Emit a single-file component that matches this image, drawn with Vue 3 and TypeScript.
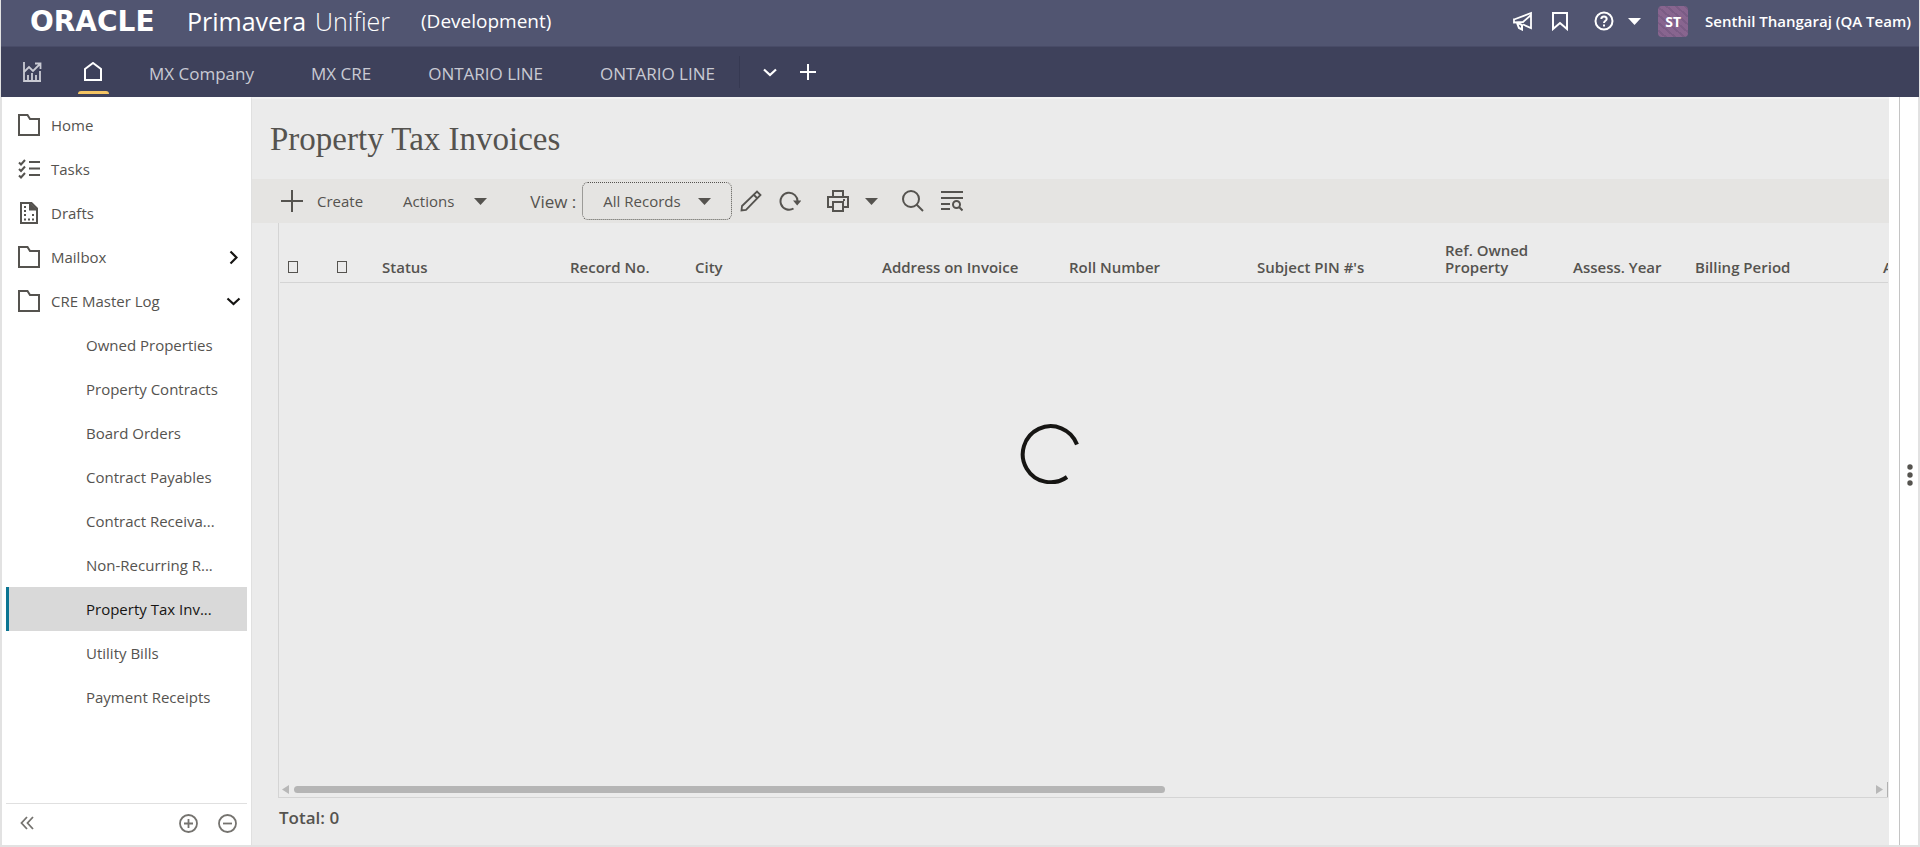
<script setup lang="ts">
import { ref } from 'vue'

interface NavItem {
  label: string
  icon: 'folder' | 'tasks' | 'drafts'
  chevron?: 'right' | 'down'
}

interface Column {
  label: string
  width: number
}

const tabs = ['MX Company', 'MX CRE', 'ONTARIO LINE', 'ONTARIO LINE']

const navItems: NavItem[] = [
  { label: 'Home', icon: 'folder' },
  { label: 'Tasks', icon: 'tasks' },
  { label: 'Drafts', icon: 'drafts' },
  { label: 'Mailbox', icon: 'folder', chevron: 'right' },
  { label: 'CRE Master Log', icon: 'folder', chevron: 'down' },
]

const logItems = [
  'Owned Properties',
  'Property Contracts',
  'Board Orders',
  'Contract Payables',
  'Contract Receiva...',
  'Non-Recurring R...',
  'Property Tax Inv...',
  'Utility Bills',
  'Payment Receipts',
]
const selected = ref('Property Tax Inv...')

const columns: Column[] = [
  { label: 'Status', width: 188 },
  { label: 'Record No.', width: 125 },
  { label: 'City', width: 187 },
  { label: 'Address on Invoice', width: 187 },
  { label: 'Roll Number', width: 188 },
  { label: "Subject PIN #'s", width: 188 },
  { label: 'Ref. Owned Property', width: 128 },
  { label: 'Assess. Year', width: 122 },
  { label: 'Billing Period', width: 188 },
  { label: 'A', width: 188 },
]
const view = ref('All Records')
const total = ref(0)
</script>

<template>
  <div class="app">
    <header class="brand-bar">
      <div class="logo">
        <span class="oracle">ORACLE</span>
        <span class="product">Primavera</span>
        <span class="product light">Unifier</span>
      </div>
      <span class="env">(Development)</span>
      <div class="user-tools">
        <button class="tool announce" aria-label="Announcements">
          <svg width="20" height="20" viewBox="0 0 20 20" fill="none" stroke="#fff" stroke-width="2">
            <path d="M1 7.500 V12.500 M1 8.500 L18 2 V17 L10 13.500 M1 11.500 L10 11 L18 4" stroke-width="1.800" />
            <path d="M4 12 L6 17 L9 18.500 V14 L5 12" />
          </svg>
        </button>
        <button class="tool bookmark" aria-label="Bookmarks">
          <svg width="16" height="20" viewBox="0 0 16 20" fill="none" stroke="#fff" stroke-width="2">
            <path d="M1 2 H15 V18 L8 12 L1 18 Z" />
          </svg>
        </button>
        <button class="tool help" aria-label="Help">
          <svg width="20" height="20" viewBox="0 0 20 20" fill="none" stroke="#fff" stroke-width="2">
            <circle cx="10" cy="10" r="8.500" />
            <path d="M7.300 8 C7.300 4.500 12.700 4.500 12.700 8 C12.700 9.800 10 9.800 10 12" />
            <path d="M10 13.500 V15.500" />
          </svg>
          <svg width="13" height="7" viewBox="0 0 13 7"><path d="M0 0 H13 L6.500 7 Z" fill="#fff" /></svg>
        </button>
        <span class="avatar">ST</span>
        <span class="user-name">Senthil Thangaraj (QA Team)</span>
      </div>
    </header>

    <nav class="tab-bar" aria-label="Workspaces">
      <button class="tab-icon" aria-label="Dashboards">
        <svg width="20" height="20" viewBox="0 0 20 20" fill="none" stroke="#c9cad3" stroke-width="1.800">
          <path d="M2 0 V19 H19" />
          <path d="M2 10 L7 5 L11 9 L18 2 M13 1.500 H18.500 V7" />
          <path d="M6 18 V13 M10 18 V11 M14 18 V13 M18 19 V9" />
        </svg>
      </button>
      <button class="tab-icon active" aria-label="Home">
        <svg width="20" height="20" viewBox="0 0 20 20" fill="none" stroke="#fff" stroke-width="2">
          <path d="M2 7 L10 1 L18 7 V18 H2 Z" />
        </svg>
      </button>
      <a v-for="(tab, i) in tabs" :key="i" class="tab" href="#">{{ tab }}</a>
      <span class="tab-divider"></span>
      <button class="tab-more" aria-label="More tabs">
        <svg width="14" height="9" viewBox="0 0 14 9" fill="none" stroke="#fff" stroke-width="2.200">
          <path d="M1 1.500 L7 7 L13 1.500" />
        </svg>
      </button>
      <button class="tab-more" aria-label="Add tab">
        <svg width="16" height="16" viewBox="0 0 16 16" stroke="#fff" stroke-width="2"><path d="M8 0 V16 M0 8 H16" /></svg>
      </button>
    </nav>

    <div class="body">
      <aside class="sidebar">
        <ul class="menu">
          <li v-for="item in navItems" :key="item.label">
            <a class="row" href="#">
              <svg v-if="item.icon === 'folder'" width="22" height="22" viewBox="0 0 22 22" fill="none" stroke="#55534f" stroke-width="2">
                <path d="M1 1 H9.500 L12 5 H21 V21 H1 Z" />
              </svg>
              <svg v-else-if="item.icon === 'tasks'" width="22" height="22" viewBox="0 0 22 22" fill="none" stroke="#55534f" stroke-width="2">
                <path d="M11 4 H22 M11 10.500 H22 M11 17 H22" />
                <path d="M1 4.500 L3 6.500 L7 2 M1 11 L3 13 L7 8.500 M1 17.500 L3 19.500 L7 15" />
              </svg>
              <svg v-else width="22" height="22" viewBox="0 0 22 22" fill="none" stroke="#55534f" stroke-width="2">
                <path d="M3 1 H13.500 L19 6.500 V21 H3 Z" />
                <path d="M12.500 1 V7.500 H19 Z" fill="#55534f" stroke="none" />
                <path d="M12 1 V7.500 H19" />
                <path d="M6 5 H8 M6 9 H8 M6 13 H8 M6 17.500 H8 M10 17.500 H12 M14 17.500 H16 M14 13 H16" />
              </svg>
              <span>{{ item.label }}</span>
              <svg v-if="item.chevron === 'right'" class="chevron side" width="9" height="15" viewBox="0 0 9 15" fill="none" stroke="#161513" stroke-width="2.200">
                <path d="M1.500 1.500 L7.500 7.500 L1.500 13.500" />
              </svg>
              <svg v-if="item.chevron === 'down'" class="chevron" width="15" height="9" viewBox="0 0 15 9" fill="none" stroke="#161513" stroke-width="2.200">
                <path d="M1.500 1.500 L7.500 7 L13.500 1.500" />
              </svg>
            </a>
          </li>
          <li v-for="item in logItems" :key="item">
            <a class="row sub" :class="{ selected: item === selected }" href="#" @click.prevent="selected = item">{{ item }}</a>
          </li>
        </ul>
        <div class="side-footer">
          <button aria-label="Collapse panel">
            <svg width="14" height="14" viewBox="0 0 14 14" fill="none" stroke="#75736f" stroke-width="1.800">
              <path d="M7 1 L1.500 7 L7 13 M13 1 L7.500 7 L13 13" />
            </svg>
          </button>
          <button class="expand" aria-label="Expand all">
            <svg width="19" height="19" viewBox="0 0 19 19" fill="none" stroke="#75736f" stroke-width="1.800">
              <circle cx="9.500" cy="9.500" r="8.500" /><path d="M9.500 5 V14 M5 9.500 H14" />
            </svg>
          </button>
          <button aria-label="Collapse all">
            <svg width="19" height="19" viewBox="0 0 19 19" fill="none" stroke="#75736f" stroke-width="1.800">
              <circle cx="9.500" cy="9.500" r="8.500" /><path d="M5 9.500 H14" />
            </svg>
          </button>
        </div>
      </aside>

      <main class="content">
        <h1>Property Tax Invoices</h1>
        <div class="toolbar">
          <button class="create">
            <svg width="22" height="22" viewBox="0 0 22 22" stroke="#55534f" stroke-width="2"><path d="M11 0 V22 M0 11 H22" /></svg>
            Create
          </button>
          <button class="actions">
            Actions
            <svg width="13" height="7" viewBox="0 0 13 7"><path d="M0 0 H13 L6.500 7 Z" fill="#55534f" /></svg>
          </button>
          <label class="view-label" for="view">View :</label>
          <div class="view-select">
            <select id="view" v-model="view">
              <option>All Records</option>
            </select>
            <svg width="13" height="7" viewBox="0 0 13 7"><path d="M0 0 H13 L6.500 7 Z" fill="#55534f" /></svg>
          </div>
          <button class="edit" aria-label="Edit view">
            <svg width="22" height="22" viewBox="0 0 22 22" fill="none" stroke="#55534f" stroke-width="1.800">
              <path d="M1.500 20.500 L2 16 L17 1.500 L20.500 5 L6 20 Z M13.500 4.500 L17.500 8.500" />
            </svg>
          </button>
          <button class="refresh" aria-label="Refresh">
            <svg width="22" height="22" viewBox="0 0 22 22" fill="none" stroke="#55534f" stroke-width="2">
              <path d="M14.500 18.500 A8.500 8.500 0 1 1 18.500 12" />
              <path d="M14 10.500 H22.500 L18.200 15.500 Z" fill="#55534f" stroke="none" />
            </svg>
          </button>
          <button class="print" aria-label="Print">
            <svg width="22" height="22" viewBox="0 0 22 22" fill="none" stroke="#55534f" stroke-width="2">
              <path d="M6 7 V1 H16 V7 M6 17 H1 V7 H21 V17 H16" />
              <path d="M6 12 H16 V21 H6 Z M16 10 H18" />
            </svg>
            <svg width="13" height="7" viewBox="0 0 13 7"><path d="M0 0 H13 L6.500 7 Z" fill="#55534f" /></svg>
          </button>
          <button class="search" aria-label="Search">
            <svg width="22" height="22" viewBox="0 0 22 22" fill="none" stroke="#55534f" stroke-width="2">
              <circle cx="9" cy="9" r="8" /><path d="M14.500 14.500 L21 21" />
            </svg>
          </button>
          <button class="find" aria-label="Find on page">
            <svg width="22" height="22" viewBox="0 0 22 22" fill="none" stroke="#55534f" stroke-width="2">
              <path d="M0 2 H22 M0 8 H22 M0 14 H9 M0 19 H9" />
              <circle cx="15.500" cy="14.500" r="3.500" /><path d="M18 17 L21.500 20.500" />
            </svg>
          </button>
        </div>

        <section class="grid">
          <div class="table-wrap">
            <table>
              <colgroup>
                <col class="flag-a" />
                <col class="flag-b" />
                <col v-for="c in columns" :key="c.label" :style="{ width: c.width + 'px' }" />
              </colgroup>
              <thead>
                <tr>
                  <th><span class="glyph"></span></th>
                  <th><span class="glyph"></span></th>
                  <th v-for="c in columns" :key="c.label" scope="col">{{ c.label }}</th>
                </tr>
              </thead>
            </table>
          </div>
          <svg class="spinner" width="60" height="60" viewBox="0 0 60 60" fill="none" stroke="#161513" stroke-width="4" role="img" aria-label="Loading">
            <path d="M58 20.500 A28 28 0 1 0 48 53" />
          </svg>
          <div class="scroll">
            <svg width="7" height="9" viewBox="0 0 7 9"><path d="M7 0 V9 L0 4.500 Z" fill="#b8b8b8" /></svg>
            <div class="track"><div class="thumb"></div></div>
            <svg width="7" height="9" viewBox="0 0 7 9"><path d="M0 0 V9 L7 4.500 Z" fill="#b8b8b8" /></svg>
            <span class="scroll-end"></span>
          </div>
        </section>
        <div class="total">Total: {{ total }}</div>
      </main>

      <div class="gutter"></div>
      <div class="rail">
        <button aria-label="Open details panel">
          <svg width="6" height="22" viewBox="0 0 6 22" fill="#55534f">
            <circle cx="3" cy="3" r="2.700" /><circle cx="3" cy="11" r="2.700" /><circle cx="3" cy="19" r="2.700" />
          </svg>
        </button>
      </div>
    </div>
  </div>
</template>

<style>
body {
  margin: 0;
  background: #e2e2e2;
}
</style>

<style scoped>
* {
  box-sizing: border-box;
}
.app {
  display: flex;
  flex-direction: column;
  height: 100vh;
  padding: 0 1px 2px;
  font-family: "Open Sans", "Noto Sans", sans-serif;
  font-size: 15px;
  color: #55534f;
  overflow: hidden;
}
button {
  display: flex;
  align-items: center;
  padding: 0;
  border: 0;
  background: none;
  color: inherit;
  font: inherit;
  cursor: pointer;
}
a {
  color: inherit;
  text-decoration: none;
}
svg {
  display: block;
  flex: none;
}

.brand-bar {
  display: flex;
  align-items: center;
  height: 47px;
  flex: none;
  padding: 0 8px 4px 29px;
  background: #515571;
  border-bottom: 1px solid #484b67;
  color: #fff;
}
.logo {
  display: flex;
  align-items: baseline;
  width: 391px;
  flex: none;
}
.oracle {
  width: 157px;
  flex: none;
  font: 700 28px/30px "DejaVu Sans", sans-serif;
}
.product {
  width: 128px;
  flex: none;
  font-size: 25px;
  line-height: 30px;
}
.product.light {
  width: auto;
  font-weight: 300;
}
.env {
  font-size: 19px;
}
.user-tools {
  display: flex;
  align-items: center;
  margin-left: auto;
}
.bookmark {
  margin-left: 19px;
}
.help {
  margin-left: 26px;
  gap: 14px;
}
.avatar {
  width: 30px;
  height: 31px;
  margin: 0 17px;
  border-radius: 4px;
  background: repeating-linear-gradient(40deg, #88658f 0 4px, #7b5c85 4px 6px);
  font-size: 14px;
  font-weight: 700;
  line-height: 31px;
  text-align: center;
}
.user-name {
  font-weight: 600;
}

.tab-bar {
  display: flex;
  align-items: center;
  height: 50px;
  flex: none;
  padding-left: 21px;
  background: #3e415b;
  color: #c9cad3;
}
.tab-icon {
  position: relative;
  height: 50px;
}
.tab-icon.active {
  margin-left: 41px;
}
.tab-icon.active::after {
  content: "";
  position: absolute;
  bottom: 3px;
  left: -5px;
  width: 31px;
  height: 3px;
  border-radius: 3px 3px 0 0;
  background: #f4c463;
}
.tab {
  margin-left: 57px;
  padding-top: 2px;
  font-size: 17px;
}
.tab-icon + .tab {
  margin-left: 46px;
}
.tab-divider {
  width: 1px;
  height: 32px;
  margin-left: 24px;
  background: #363952;
}
.tab-more {
  margin-left: 23px;
}

.body {
  display: flex;
  flex: 1;
  min-height: 0;
}
.sidebar {
  display: flex;
  flex-direction: column;
  width: 250px;
  flex: none;
  padding: 0 4px;
  border-left: 1px solid #e2e2e2;
  background: #fff;
  font-weight: 500;
}
.menu {
  flex: 1;
  margin: 0;
  padding: 6px 0 0;
  list-style: none;
}
.row {
  display: flex;
  align-items: center;
  gap: 11px;
  height: 44px;
  padding: 0 6px 0 12px;
}
.chevron {
  margin-left: auto;
}
.chevron.side {
  margin-right: 3px;
}
.row.sub {
  padding-left: 77px;
  border-left: 3px solid transparent;
}
.row.selected {
  border-left-color: #0b7592;
  background: #d9d9d9;
  color: #161513;
}
.side-footer {
  display: flex;
  align-items: center;
  gap: 20px;
  height: 42px;
  padding: 0 10px 3px 14px;
  border-top: 1px solid #e0e0e0;
}
.expand {
  margin-left: auto;
}

.content {
  display: flex;
  flex-direction: column;
  flex: 1;
  min-width: 0;
  border-left: 1px solid #e0e0e0;
  border-top: 2px solid #f2f2f2;
  background: #ebebeb;
}
h1 {
  margin: 0;
  padding: 22px 18px 21px;
  font: 400 33px/37px "Liberation Serif", serif;
}
.toolbar {
  display: flex;
  align-items: center;
  height: 44px;
  padding: 0 29px;
  background: #e5e4e2;
}
.create {
  gap: 14px;
}
.actions {
  gap: 20px;
  margin-left: 40px;
}
.view-label {
  margin: 0 6px 0 43px;
  font-size: 17px;
}
.view-select {
  position: relative;
  width: 150px;
}
.view-select select {
  display: block;
  width: 100%;
  height: 38px;
  padding: 0 20px;
  border: 1px dotted #55534f;
  border-radius: 6px;
  background: transparent;
  appearance: none;
  color: inherit;
  font: inherit;
}
.view-select svg {
  position: absolute;
  top: 16px;
  right: 21px;
  pointer-events: none;
}
.edit {
  margin-left: 8px;
}
.refresh {
  margin-left: 17px;
}
.print {
  gap: 16px;
  margin-left: 26px;
}
.search {
  margin-left: 24px;
}
.find {
  margin-left: 17px;
}

.grid {
  position: relative;
  display: flex;
  flex-direction: column;
  flex: 1;
  min-height: 0;
  margin: 0 1px 0 26px;
  border-left: 1px solid #d4d4d4;
  border-bottom: 1px solid #d4d4d4;
}
.table-wrap {
  flex: 1;
  overflow: hidden;
  margin-left: 1px;
}
table {
  width: 1782px;
  table-layout: fixed;
  border-collapse: collapse;
}
.flag-a {
  width: 49px;
}
.flag-b {
  width: 45px;
}
th {
  height: 59px;
  padding: 0 8px 6px;
  border-bottom: 1px solid #d4d4d4;
  font-weight: 600;
  line-height: 17px;
  text-align: left;
  vertical-align: bottom;
}
.glyph {
  display: block;
  width: 10px;
  height: 12px;
  margin-bottom: 3px;
  border: 1px solid #55534f;
}
.spinner {
  position: absolute;
  top: 35%;
  left: 46%;
}
.scroll {
  display: flex;
  align-items: center;
  height: 15px;
  padding-left: 3px;
}
.track {
  flex: 1;
  margin: 0 5px;
}
.thumb {
  width: 55.2%;
  height: 7px;
  border-radius: 4px;
  background: #b5b5b5;
}
.scroll-end {
  width: 1px;
  height: 15px;
  margin-left: 4px;
  background: #b0b0b0;
}
.total {
  height: 47px;
  padding: 7px 27px 0;
  font-size: 17px;
  font-weight: 600;
  line-height: 26px;
}
.gutter {
  width: 10px;
  background: #fff;
}
.rail {
  display: flex;
  align-items: center;
  justify-content: center;
  width: 19px;
  margin-right: 1px;
  padding: 8px 0 0 2px;
  border-left: 1px solid #c4c4c4;
  background: #fff;
}
</style>
